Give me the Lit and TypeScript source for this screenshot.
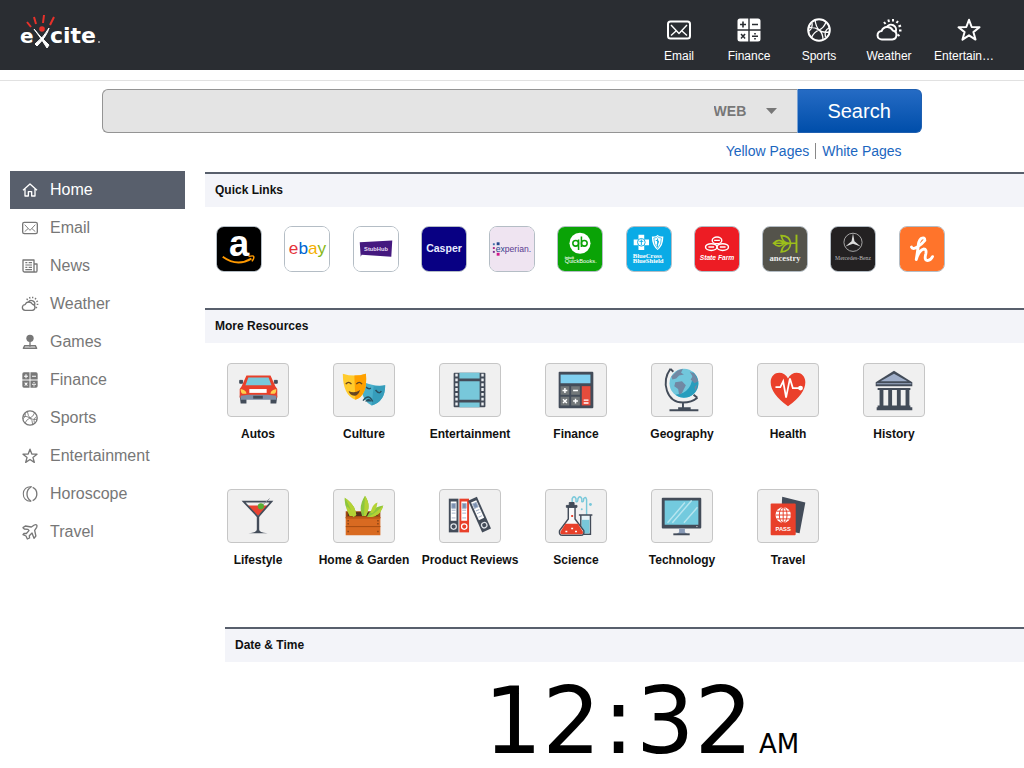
import { LitElement, html, svg, css, SVGTemplateResult } from "lit";
import { customElement, property } from "lit/decorators.js";

const SANS = css`"Liberation Sans", Arial, sans-serif`;

/* Line glyphs, drawn on a 24 x 24 grid in the current text colour. */
const glyphs: Record<string, SVGTemplateResult> = {
  home: svg`<path d="M1.5 12.5L12 3l10.5 9.500M4.500 10v11h5v-6.500h5V21h5V10"/>`,
  email: svg`<rect x="1" y="3.500" width="22" height="17" rx="2.500"/><path d="M4 7l8 8.500L20 7M4 17.500l5-4.500M20 17.500l-5-4.500" stroke-width="1.400"/>`,
  news: svg`<path d="M18 21H4a2.500 2.500 0 0 1-2.500-2.500V3H18v16a2 2 0 0 0 4.500 0V9H18M18 21h2.500"/><path d="M5 7h3M10 7h5M5 10.500h10M5 14h3M10 14h5M5 17.500h10" stroke-width="1.800"/>`,
  weather: svg`<path d="M5 21.500a4.300 4.300 0 0 1-.3-8.600 6 6 0 0 1 11-.5 4.600 4.600 0 0 1-.4 9.100z"/><path d="M9.500 9.500a5 5 0 1 1 9 4.500"/><path d="M8.500 6L7 4M12 4l-.7-2.500M16 3.500V1M19.500 5L21 3M21.500 8.500l2.500-1M22 12.500h2.500M20.500 16.500l2 1.500"/>`,
  games: svg`<circle cx="12" cy="6.500" r="5.500" fill="currentColor" stroke="none"/><path d="M12 11v8"/><path d="M4 17.500h16l2 4H2z" fill="currentColor" fill-opacity=".4"/>`,
  finance: svg`<g fill="currentColor" stroke="none"><path fill-rule="evenodd" d="M3 .5h8.300v10.800H.5V3A2.500 2.500 0 0 1 3 .5zM5.200 3.500v2.200H3v1.600h2.200v2.200h1.600V7.300H9V5.700H6.800V3.500z"/><path fill-rule="evenodd" d="M12.700.5H21A2.500 2.500 0 0 1 23.500 3v8.300H12.700zM15 5.700v1.600h6V5.700z"/><path fill-rule="evenodd" d="M.5 12.700h10.800v10.800H3A2.500 2.500 0 0 1 .5 21zM4.500 15.500l-1 1 1.500 1.700-1.500 1.700 1 1L6 19.300l1.600 1.600 1-1-1.500-1.700 1.500-1.700-1-1L6 17z"/><path fill-rule="evenodd" d="M12.700 12.700h10.800V21a2.500 2.500 0 0 1-2.500 2.500h-8.300zM15 17.500V19h6v-1.500zM17.200 14.900v1.600h1.600v-1.600zM17.200 20v1.600h1.600V20z"/></g>`,
  sports: svg`<circle cx="12" cy="12" r="10.800"/><path d="M8 2Q9 9 12 12T22.500 14M19 4Q17 10 12 12T4.500 19.500M1.500 9.500Q8 9 12 12T16 22M5 5Q6 10 2 13M22 10Q17 12 18.500 19" stroke-width="1.300"/>`,
  star: svg`<path d="M12 1.800l2.700 7.200 7.800.3-6.100 4.800 2.100 7.500L12 17.300l-6.500 4.300 2.100-7.500L1.500 9.300l7.800-.3z"/>`,
  moon: svg`<path d="M15 1.200C-2-1.500-2.500 24.500 14 22.800" stroke-width="1.600"/><path d="M13.500 1.500C5.500 6 5.500 18 13.500 22.500"/><path d="M16 2.200a10.800 10.800 0 0 1 0 19.600"/>`,
  plane: svg`<path d="M9 8L3.500 7.500 1.500 5.500 5 3l9 1.500 4.500-3c3-1.500 5 .5 3.500 3.500L19 9.500l1.800 8.500-2.800 3.500-3-8-4 4 .3 3.500L8 22.500l-2-4.500-4.500-2L3 14l3.500.3 4-4.300z"/>`,
};

/* Brand marks, drawn on a 46 x 46 tile. */
interface Brand { name: string; color: string; art: SVGTemplateResult }
const brands: Brand[] = [
  { name: "Amazon", color: "#000", art: svg`
    <text x="23" y="30" class="sans b mid" font-size="38" fill="#fff">a</text>
    <path d="M6 31Q21 42 36 33" fill="none" stroke="#f90" stroke-width="2"/><path d="M33 31q5-1.500 5.500 0t-2 5" fill="none" stroke="#f90" stroke-width="1.500"/>` },
  { name: "eBay", color: "#fff", art: svg`
    <text x="4" y="28" class="sans" font-size="18"><tspan fill="#e53238">e</tspan><tspan fill="#0064d2">b</tspan><tspan fill="#f5af02">a</tspan><tspan fill="#86b817">y</tspan></text>` },
  { name: "StubHub", color: "#fff", art: svg`
    <path d="M6 16l34-2-1 17-31-2-1 2z" fill="#45197f"/><text x="23" y="25" class="sans b mid" font-size="6" fill="#e9dff5">StubHub</text>` },
  { name: "Casper", color: "#080083", art: svg`<text x="23" y="26" class="sans b mid" font-size="11" fill="#e8ecff">Casper</text>` },
  { name: "Experian", color: "#efe4f1", art: svg`
    <g><rect x="3" y="17" width="2" height="2" fill="#426da9"/><rect x="7" y="16" width="3" height="3" fill="#26478d"/><rect x="3" y="21" width="2" height="2" fill="#b02a87"/><rect x="7" y="27" width="3" height="3" fill="#d0168a"/><rect x="3" y="25" width="2" height="2" fill="#762a8c"/></g>
    <text x="6" y="26" class="sans" font-size="9" fill="#26478d">ex<tspan fill="#5a3b90">perian.</tspan></text>` },
  { name: "QuickBooks", color: "#0aa306", art: svg`
    <circle cx="23" cy="17" r="11" fill="#fff"/><g fill="none" stroke="#0aa306" stroke-width="1.600"><circle cx="18.500" cy="17" r="3"/><path d="M21.500 13v11M24.500 10v11"/><circle cx="27.500" cy="17" r="3"/></g>
    <text x="7" y="33" class="sans b" font-size="4" fill="#fff">intuit</text><text x="7" y="38" class="sans" font-size="6" fill="#fff">QuickBooks.</text>` },
  { name: "BlueCross BlueShield", color: "#0aabe6", art: svg`
    <path d="M12 8h6v5h5v6h-5v5h-6v-5H7v-6h5z" fill="#fff"/><circle cx="15" cy="16" r="4" fill="none" stroke="#0aabe6"/><path d="M15 13v6M13 15h4" stroke="#0aabe6"/>
    <path d="M26 10q5 0 6-2 1 2 6 2 0 10-6 14-6-4-6-14z" fill="#fff"/><path d="M28 11.500q3 0 4-1.500 1 1.500 4 1.500 0 7-4 11-4-4-4-11z" fill="none" stroke="#0aabe6" stroke-width=".7"/><path d="M32 12v9M30 14q4 0 3 2t-2 3" stroke="#0aabe6" fill="none"/>
    <text x="6" y="32" class="serif b" font-size="7" fill="#fff">BlueCross</text><text x="6" y="38" class="serif b" font-size="7" fill="#fff">BlueShield</text>` },
  { name: "State Farm", color: "#ed1c24", art: svg`
    <g fill="none" stroke="#fff" stroke-width="1.500"><ellipse cx="23" cy="14" rx="5" ry="3.500"/><ellipse cx="17" cy="21" rx="6" ry="3.500"/><ellipse cx="29" cy="21" rx="6" ry="3.500"/></g><path d="M20 14h6M14 21h6M26 21h6" stroke="#fff" stroke-width="1.500"/>
    <text x="23" y="35" class="sans b i mid" font-size="7" fill="#fff">State Farm</text>` },
  { name: "Ancestry", color: "#54534b", art: svg`
    <path d="M35 8v19" stroke="#9cbe1b" stroke-width="2"/><g fill="none" stroke="#9cbe1b" stroke-width="1.800"><path d="M11 17h24M11 17q6-6 11 0-5 6-11 0zM19 9q9 0 10 8-8 1-10-8zM19 26q9 0 10-9-8 0-10 9z"/></g>
    <text x="23" y="36" class="serif b mid" font-size="9" fill="#eee">ancestry</text>` },
  { name: "Mercedes-Benz", color: "#232122", art: svg`
    <circle cx="23" cy="16" r="9.500" fill="none" stroke="#aaa"/><path d="M23 6.500l1.500 8.500 6.500 5.500-8-3-8 3 6.500-5.500z" fill="#ddd"/>
    <text x="23" y="34" class="serif mid" font-size="6" fill="#bbb">Mercedes-Benz</text>` },
  { name: "Honey", color: "#ff742b", art: svg`
    <path d="M12 21Q13 24 18 21T26 14Q26 10 22 12Q19 15 19 21L17 34Q20 24 25 23Q28 23 27 28Q25 35 29 35Q32 35 34 31" fill="none" stroke="#fff" stroke-width="3" stroke-linecap="round" stroke-linejoin="round"/>` },
];

/* Topic pictures, drawn on a 62 x 54 tile. */
interface Topic { label: string; art: SVGTemplateResult }
const topics: Topic[] = [
  { label: "Autos", art: svg`
    <path d="M12 33h7v8h-6zM44 33h7l-1 8h-6z" fill="#434c59"/><path d="M12 17h3v3h-3zM48 17h3v3h-3z" fill="#434c59" stroke="#434c59"/>
    <path d="M19 12h25l5 11 2 3v9H12v-9l2-3z" fill="#e8402a"/><path d="M21 14h21l3 8H18z" fill="#78c8da"/><path d="M22 26h18v4H22z" fill="#fff"/>
    <path d="M13 26q6 1 6 5h-4q-2-1-2-5zM50 26q-6 1-6 5h4q2-1 2-5z" fill="#ffd04d"/><path d="M13 33l8-1h20l9 1v4H13z" fill="#7e8da5"/><path d="M26 33h10v3H26z" fill="#434c59"/>` },
  { label: "Culture", art: svg`
    <path d="M31 19q12 5 22 3 0 17-14 21-10-5-10-16z" fill="#4aafcb"/><path d="M41 23q7 0 12-1 0 17-14 21z" fill="#369dbb"/><path d="M30 38q6-8 10 1M43 27q4 5 6 1M33 24q3 3 5 1" fill="none" stroke="#294f60" stroke-width="1.500"/><path d="M32 39q4-6 7 0z" fill="#294f60"/>
    <path d="M9 10q12 4 24 0 2 23-11 27Q9 32 9 10z" fill="#ffcb2d"/><path d="M21 12q6 0 12-2 2 23-11 27z" fill="#ffa000"/><path d="M12 21q3-4 6 0M23 21q3-4 6 0" fill="none" stroke="#654521" stroke-width="1.300"/><path d="M15 28q6 3 12-1-2 6-6 6-5-1-6-5z" fill="#654521"/>` },
  { label: "Entertainment", art: svg`
    <rect x="14" y="9" width="33" height="36" rx="1" fill="#434c59"/><path d="M20 9h21v6H20zM20 18h21v19H20zM20 40h21v5H20z" fill="#78c8da"/><path d="M17 10v35M44 10v35" stroke="#edf0f3" stroke-width="2.500" stroke-dasharray="3 2"/>` },
  { label: "Finance", art: svg`
    <rect x="13" y="8" width="36" height="38" rx="1" fill="#434c59"/><path d="M15 11h31v9H15z" fill="#80d0f0"/><path d="M15 23h9v9h-9zM26 23h9v9h-9zM15 34h9v9h-9zM26 34h9v9h-9z" fill="#73787a"/><path d="M37 23h9v20h-9z" fill="#e64c3c"/>
    <path d="M17 27.500h5M19.500 25v5M28 27.500h5M17.500 36.500l4 4M21.500 36.500l-4 4M28 38.500h5M30.500 36v5M39 37.500h5M39 40.500h5" stroke="#fff" stroke-width="1.500"/>` },
  { label: "Geography", art: svg`
    <path d="M19 5C9 19 15 40 32 40q9 0 15-5M32 40v7M19 5l3 3M47 35l-4-3" fill="none" stroke="#434c59" stroke-width="2"/><path d="M27 45h13v2h8v2H18v-2h9z" fill="#434c59"/>
    <circle cx="33" cy="20" r="15" fill="#71c7dc"/><path d="M42 8a15 15 0 0 1-18 24q19-2 18-24z" fill="#279dbd"/><path d="M20 13l6-6 6-2-2 4 3 2-5 1-3 3-4 1zM24 19l7-1 4 4-4 8-3 2-1-6-4-3zM39 8l5 2 4 8-4 2-4-4 2-3zM44 24l3-3-2 7z" fill="#7188a3"/>` },
  { label: "Health", art: svg`
    <path d="M31 44Q13 31 13 19C13 7 27 6 31 15C35 6 49 7 49 19Q49 31 31 44z" fill="#ea402b"/><path d="M18 24h5l3-6 3 17 4-20 3 10h8" fill="none" stroke="#fff" stroke-width="1.800"/><circle cx="44" cy="25" r="2.500" fill="#fff"/>` },
  { label: "History", art: svg`
    <path d="M12 19L31 7l19 12v4H12z" fill="#434c59"/><path d="M17 18l14-8 14 8z" fill="#9faec9"/><path d="M13 20h36v1H13z" fill="#9faec9"/><path d="M14 25h34v2H14zM13 45h37v3H13zM14 43h34v2H14z" fill="#434c59"/><path d="M18 26v18M27 26v18M36 26v18M45 26v18" stroke="#434c59" stroke-width="4"/>` },
  { label: "Lifestyle", art: svg`
    <path d="M20 16h22L31 27z" fill="#e94331"/><path d="M16 12h29L31 28z" fill="none" stroke="#434c59" stroke-width="1.800"/><path d="M31 27v17" stroke="#434c59" stroke-width="2.500"/><path d="M21 45q9-1 9-4h2q0 3 9 4z" fill="#434c59"/><path d="M33 18l10-9" stroke="#8b9097"/><circle cx="34" cy="17" r="3.200" fill="#57ac33"/>` },
  { label: "Home & Garden", art: svg`
    <path d="M12 22h36v7H12z" fill="#a34b12"/><path d="M14 23h31v4H14z" fill="#54301d"/><path d="M20 28Q10 20 11 8q11 7 12 18zM29 27q-4-10 3-21 7 10 1 21zM34 28q4-10 17-12-3 11-12 12z" fill="#8cc63f"/><path d="M20 28Q17 18 11 8q11 7 12 18zM31 27l1-21q7 10 1 21zM35 28q7-3 16-12-3 11-12 12zM16 27q-4-8-3-10 7 5 7 10zM38 24q1-9 7-11-1 8-5 11z" fill="#b4d234"/>
    <path d="M12 28h36v19H12z" fill="#d86a21"/><path d="M12 29h36M12 38h36" stroke="#a34b12"/><path d="M14 32h1M45 32h1M14 43h1M45 43h1M14 35h1M45 35h1" stroke="#613011" stroke-width="1.500"/>` },
  { label: "Product Reviews", art: svg`
    <path d="M9 9h10v35H9z" fill="#434c59"/><path d="M20 9h10v35H20z" fill="#e8402a"/><path d="M11 12h6v20h-6zM22 12h6v20h-6z" fill="#fff"/><path d="M12 14h4v5h-4zM23 14h4v5h-4zM12 21h4M12 24h4M23 21h4M23 24h4M12 29h4M23 29h4" stroke="#a4b2c8" fill="#7b90b0"/><circle cx="14" cy="38" r="2.800" fill="none" stroke="#dfe3e8" stroke-width="1.300"/><circle cx="25" cy="38" r="2.800" fill="none" stroke="#fff" stroke-width="1.300"/>
    <g transform="rotate(-24 40 26)"><path d="M36 8h10v36H36z" fill="#434c59"/><path d="M38 11h6v20h-6z" fill="#fff"/><path d="M39 13h4v5h-4zM39 21h4M39 24h4M39 28h4" stroke="#a4b2c8" fill="#7b90b0"/><circle cx="41" cy="38" r="2.800" fill="none" stroke="#dfe3e8" stroke-width="1.300"/></g>` },
  { label: "Science", art: svg`
    <path d="M27 15V9q2-4 4 0v3q2 1 2-3 2-4 4 0v3q2 1 2-3 2-3 3 1v16" fill="none" stroke="#78c8da" stroke-width="1.500"/><circle cx="46" cy="15" r="1.500" fill="#78c8da"/><circle cx="37" cy="20" r="1" fill="#78c8da"/><path d="M34 26h14M36 26v20h10V26" fill="#e9f4f7" stroke="#434c59" stroke-width="1.500"/><path d="M37 31h8v14h-8z" fill="#78c8da"/>
    <path d="M23 17v13L14 42q-1 5 3 5h19q4 0 3-5L30 30V17z" fill="#f8f8f8" stroke="#434c59" stroke-width="1.500"/><path d="M20 35h13l5 8q1 3-2 3H17q-3 0-2-3z" fill="#e8402a"/><path d="M21 16h11v2H21zM24 13h5v5h-5z" fill="#434c59" stroke="#434c59"/><path d="M20 43h2M26 40h2M30 43h2" stroke="#fff" stroke-width="1.500"/><path d="M26 27h2" stroke="#e8402a" stroke-width="2"/>` },
  { label: "Technology", art: svg`
    <rect x="10" y="8" width="41" height="32" rx="1" fill="#434c59"/><path d="M13 11h35v25H13z" fill="#73cade"/><path d="M16 34l18-21M21 34l20-23M33 34l14-16" stroke="#b6e5ef" stroke-width="1.500"/><path d="M28 40h6v4l3 2H25l3-2z" fill="#8799b6"/><path d="M22 45h17v2H22z" fill="#434c59"/><path d="M46 38h1" stroke="#fff"/>` },
  { label: "Travel", art: svg`
    <path d="M25 7l24 6-6 32-20-4z" fill="#434c59"/><rect x="13" y="14" width="26" height="33" rx="1" fill="#e8402a"/><circle cx="26" cy="26" r="8" fill="#fff"/><g fill="none" stroke="#e8402a" stroke-width="1"><ellipse cx="26" cy="26" rx="4" ry="8"/><path d="M18 26h16M26 18v16M19 22h14M19 30h14"/></g><text x="26" y="43" class="sans b mid" font-size="6" fill="#fff">PASS</text>` },
];

const topLinks = [
  ["Email", "email"], ["Finance", "finance"], ["Sports", "sports"], ["Weather", "weather"], ["Entertain…", "star"],
];
const sideLinks = [
  ["Home", "home"], ["Email", "email"], ["News", "news"], ["Weather", "weather"], ["Games", "games"],
  ["Finance", "finance"], ["Sports", "sports"], ["Entertainment", "star"], ["Horoscope", "moon"], ["Travel", "plane"],
];

@customElement("line-icon")
class LineIcon extends LitElement {
  @property() name = "home";
  static styles = css`
    :host { display: block; width: 24px; height: 24px; }
    .glyph { display: block; width: 100%; height: 100%; fill: none; stroke: currentColor; stroke-width: 2; stroke-linejoin: round; overflow: visible; }
  `;
  render() {
    return html`<svg class="glyph" viewBox="0 0 24 24" aria-hidden="true">${glyphs[this.name]}</svg>`;
  }
}

@customElement("app-root")
class AppRoot extends LitElement {
  static styles = css`
    :host { display: block; min-height: 100vh; background: #fff; font-family: ${SANS}; color: #111; }
    a { text-decoration: none; color: inherit; }
    svg { display: block; overflow: visible; }
    .sans { font-family: ${SANS}; }
    .serif { font-family: "Liberation Serif", serif; }
    .wide { font-family: "DejaVu Sans", sans-serif; }
    .b { font-weight: bold; }
    .i { font-style: italic; }
    .mid { text-anchor: middle; }

    .top { display: flex; justify-content: space-between; height: 70px; box-sizing: border-box; padding: 12px 15px 0 20px; background: #2a2d32; color: #fff; }
    .logo { width: 82px; height: 40px; }
    .logo svg { width: 100%; height: 100%; }
    .apps { display: flex; margin: 0; padding: 0; list-style: none; }
    .app { width: 70px; padding-top: 6px; }
    .app:last-child { width: 80px; margin-left: 5px; }
    .app-link { display: flex; flex-direction: column; align-items: center; gap: 6px; font-size: 12px; line-height: 16px; }
    .app:last-child .app-name { align-self: flex-start; padding-left: 5px; }

    .finder { margin-top: 10px; border-top: 1px solid #e1e1e1; padding-top: 8px; }
    .search { display: flex; width: 80%; height: 44px; margin: 0 auto; box-sizing: border-box; }
    .field { display: flex; flex: 1; align-items: center; box-sizing: border-box; border: 1px solid #949494; border-right: 0; border-radius: 6px 0 0 6px; background: #e4e4e4; }
    .query { flex: 1; min-width: 0; height: 40px; padding: 0 12px; border: 0; background: transparent; font: 18px ${SANS}; outline: none; }
    .scope { display: flex; align-items: center; padding-right: 20px; }
    .scope select { appearance: none; width: 52px; border: 0; padding: 0; background: transparent; font: bold 14px ${SANS}; color: #777; }
    .scope svg { width: 11px; height: 6px; }
    .go { width: 125px; border: 1px solid #1e5fb0; border-left-color: #7ba3d4; border-radius: 0 6px 6px 0; padding: 0; background: linear-gradient(#256bc4, #004eaa); font: 20px ${SANS}; color: #fff; }
    .pages { display: flex; justify-content: flex-end; width: 80%; margin: 10px auto 0; box-sizing: border-box; padding-right: 20px; font-size: 14px; line-height: 16px; color: #1b66c0; }
    .pages a + a { margin-left: 6px; border-left: 1px solid #888; padding-left: 6px; }

    .body { display: grid; grid-template-columns: 175px minmax(0, 1fr); column-gap: 20px; padding: 12px 0 0 10px; }
    .menu { margin: 0; padding: 0; list-style: none; }
    .menu-link { display: flex; align-items: center; gap: 12px; height: 38px; padding-left: 12px; font-size: 16px; color: #777; }
    .menu-link line-icon { width: 16px; height: 16px; }
    .menu-link.current { background: #585f6c; color: #fff; }

    .heading { margin: 0; border-top: 2px solid #585f6c; padding: 0 10px; background: #f3f4f9; font-size: 12px; line-height: 33px; }
    .main { padding-top: 1px; }
    .brands { display: grid; grid-template-columns: repeat(12, 1fr); justify-items: center; padding: 19px 0 36px; }
    .brand { box-sizing: border-box; width: 46px; height: 46px; border: 1px solid #b4bdc5; border-radius: 8px; }
    .brand svg { width: 100%; height: 100%; }
    .topics { display: flex; flex-wrap: wrap; row-gap: 46px; padding: 20px 0 58px; }
    .topic { display: flex; flex-direction: column; align-items: center; width: 106px; height: 80px; gap: 9px; font-size: 12px; font-weight: bold; line-height: 16px; white-space: nowrap; }
    .picture { box-sizing: border-box; width: 62px; height: 54px; border: 1px solid #c6c6c6; border-radius: 4px; background: #f0f0f0; }
    .picture svg { width: 100%; height: 100%; }
    .when { margin-left: 20px; }
    .clock { display: flex; justify-content: center; align-items: baseline; gap: 6px; padding: 14px 0 0 34px; font-family: "DejaVu Sans", sans-serif; font-size: 92px; line-height: 92px; color: #000; }
    .colon { padding: 0 2px; }
    .half { font-size: 26px; line-height: 32px; }
  `;

  private logo() {
    return html`<svg viewBox="0 0 82 40" role="img" aria-label="Excite">
      <g fill="none" stroke="#e8312a" stroke-width="2"><path d="M7 10l4 5M14 5l2 7M24 3l-1 8M34 5l-4 8"/></g><circle cx="22" cy="17" r="2.800" fill="#e8312a"/>
      <text x="0" y="31" class="wide b" font-size="20" fill="#fff">e</text>
      <path d="M14 17q6 8 15 16l-2 3q-6-10-13-19zM29 16q-2 8-12 18l-2-2q10-8 14-16z" fill="#fff" stroke="#fff"/>
      <text x="30" y="31" class="wide b" font-size="22" fill="#fff">cite</text><path d="M78 30h2" stroke="#fff"/>
    </svg>`;
  }

  render() {
    return html`
      <header class="top">
        <a class="logo" href="#home">${this.logo()}</a>
        <nav aria-label="Apps"><ul class="apps">
          ${topLinks.map(([label, icon]) => html`<li class="app"><a class="app-link" href="#${icon}"><line-icon name=${icon}></line-icon><span class="app-name">${label}</span></a></li>`)}
        </ul></nav>
      </header>
      <div class="finder">
        <form class="search" @submit=${(e: Event) => e.preventDefault()}>
          <div class="field">
            <input class="query" type="text" aria-label="Search terms" />
            <div class="scope"><select aria-label="Search in"><option>WEB</option></select><svg viewBox="0 0 11 6" aria-hidden="true"><path d="M0 0h11L5.500 6z" fill="#777"/></svg></div>
          </div>
          <button class="go" type="submit">Search</button>
        </form>
        <div class="pages"><a href="#yellow">Yellow Pages</a><a href="#white">White Pages</a></div>
      </div>
      <div class="body">
        <nav aria-label="Sections"><ul class="menu">
          ${sideLinks.map(([label, icon], i) => html`<li><a class="menu-link ${i === 0 ? "current" : ""}" href="#${icon}"><line-icon name=${icon}></line-icon>${label}</a></li>`)}
        </ul></nav>
        <main class="main">
          <section>
            <h2 class="heading">Quick Links</h2>
            <div class="brands">
              ${brands.map((b) => html`<a class="brand" href="#" aria-label=${b.name}><svg viewBox="0 0 46 46"><rect width="46" height="46" rx="7" fill=${b.color}></rect>${b.art}</svg></a>`)}
            </div>
          </section>
          <section>
            <h2 class="heading">More Resources</h2>
            <div class="topics">
              ${topics.map((t) => html`<a class="topic" href="#"><span class="picture"><svg viewBox="0 0 62 54" aria-hidden="true">${t.art}</svg></span>${t.label}</a>`)}
            </div>
          </section>
          <section class="when">
            <h2 class="heading">Date &amp; Time</h2>
            <div class="clock"><span>12<span class="colon">:</span>32</span><span class="half">AM</span></div>
          </section>
        </main>
      </div>`;
  }
}
